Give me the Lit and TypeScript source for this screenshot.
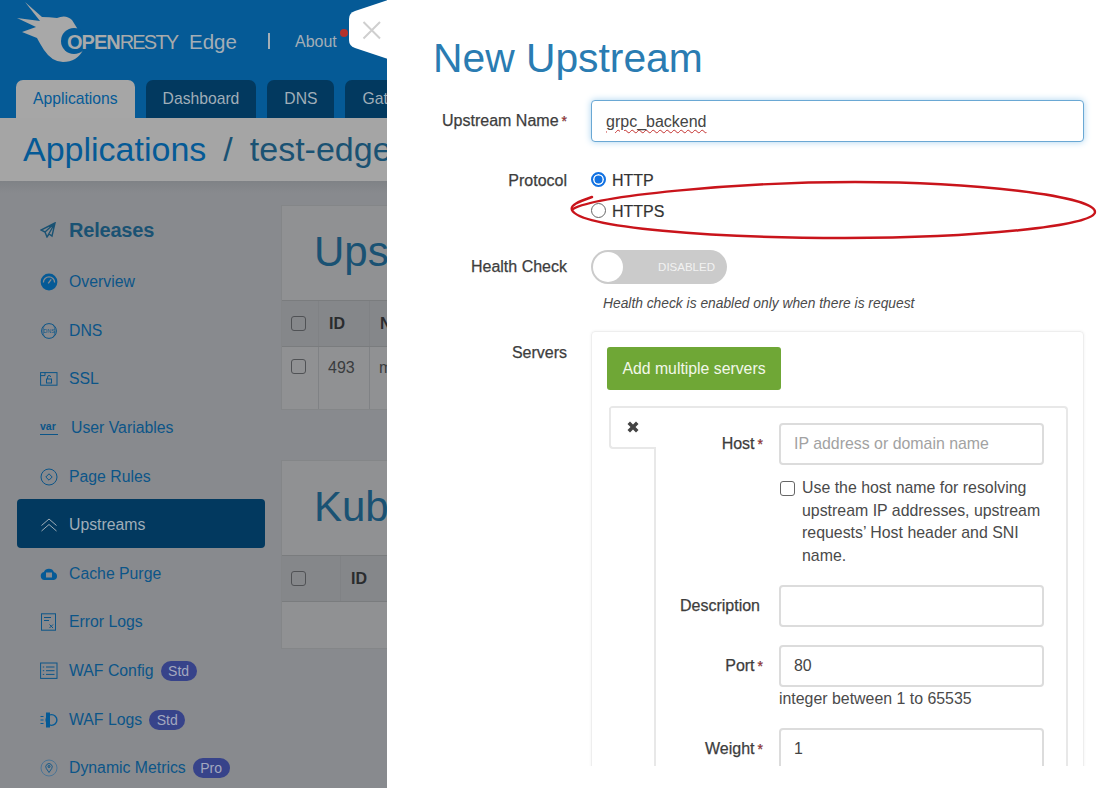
import { LitElement, html, css, svg } from "lit";
import { customElement } from "lit/decorators.js";

const stroke = (body: unknown) =>
  html`<svg class="ico" viewBox="0 0 18 18" fill="none" stroke="currentColor" stroke-width="1">${body}</svg>`;

const icons: Record<string, unknown> = {
  overview: html`<svg class="ico" viewBox="0 0 18 18"><circle cx="9" cy="9" r="8.400" fill="#055a96" /><path d="M3.400 9.500a5.600 5.600 0 0 1 11.200 0" fill="none" stroke="#888a8e" stroke-width="1.300" /><path d="M8.200 10.400l3-4" stroke="#888a8e" stroke-width="1.300" /></svg>`,
  dns: stroke(svg`<circle cx="9" cy="9" r="7.400" /><path d="M5 2.500C2.500 6 2.500 12 5 15.500M13 2.500c2.500 3.500 2.500 9.500 0 13" stroke-width=".6" /><text x="9" y="11" font-size="5.500" text-anchor="middle" fill="currentColor" stroke="none" font-family="Liberation Sans">DNS</text>`),
  ssl: stroke(svg`<rect x=".6" y="2.600" width="16.400" height="12.600" /><path d="M.6 5.600h4.400V2.600" /><rect x="6.500" y="9" width="5" height="4" /><path d="M7.600 9V7a1.500 1.500 0 0 1 3 0" />`),
  rules: stroke(svg`<circle cx="9" cy="9" r="8" /><path d="M9 5.800L12.200 9 9 12.200 5.800 9z" />`),
  upstreams: stroke(svg`<path d="M1.500 9.500L9 3l7.500 6.500M1.500 15L9 8.500 16.500 15" />`),
  cache: html`<svg class="ico" viewBox="0 0 18 18"><path d="M4.500 15a4 4 0 0 1-.6-7.900A5.500 5.500 0 0 1 14 7.200 4 4 0 0 1 13.800 15z" fill="#055a96" /><rect x="6" y="7.500" width="6" height="5" fill="#888a8e" /></svg>`,
  errors: stroke(svg`<rect x="1.500" y=".8" width="14" height="16.400" /><path d="M4 4.500h7M4 7.500h5M9.500 11.500l3.500 3.500M13 11.500L9.500 15" />`),
  wafconfig: stroke(svg`<rect x=".6" y="1" width="16.400" height="15.400" /><path d="M6 5h8.500M6 8.700h8.500M6 12.400h8.500M2.800 5h1.400M2.800 8.700h1.400M2.800 12.400h1.400" />`),
  waflogs: html`<svg class="ico" viewBox="0 0 18 18"><path d="M6 1.500h4v15H6z" fill="#055a96" /><circle cx="11.500" cy="9" r="5.400" fill="none" stroke="#055a96" stroke-width="1.400" /><path d="M.5 5.500h3M.5 9h3M.5 12.500h3" stroke="#055a96" stroke-width="1.200" /></svg>`,
  metrics: stroke(svg`<circle cx="9" cy="9" r="8" stroke="#4c7596" /><path d="M9 13.500L6.300 9.500a3.200 3.200 0 1 1 5.400 0z" stroke-width=".9" /><circle cx="9" cy="7.500" r="1" />`),
};

const navItems = [
  { icon: "overview", label: "Overview" },
  { icon: "dns", label: "DNS" },
  { icon: "ssl", label: "SSL" },
  { icon: "var", label: "User Variables" },
  { icon: "rules", label: "Page Rules" },
  { icon: "upstreams", label: "Upstreams", active: true },
  { icon: "cache", label: "Cache Purge" },
  { icon: "errors", label: "Error Logs" },
  { icon: "wafconfig", label: "WAF Config", badge: "Std" },
  { icon: "waflogs", label: "WAF Logs", badge: "Std" },
  { icon: "metrics", label: "Dynamic Metrics", badge: "Pro" },
];

@customElement("app-root")
export class AppRoot extends LitElement {
  static styles = css`
    * {
      box-sizing: border-box;
    }
    :host {
      display: block;
      width: 1098px;
      height: 788px;
      overflow: hidden;
      position: relative;
      font-family: "Liberation Sans", Arial, sans-serif;
      font-size: 16px;
    }
    .stage {
      display: flex;
      height: 788px;
    }

    /* dimmed page behind the drawer */
    .page {
      width: 387px;
      flex: none;
      overflow: hidden;
      background: #888a8e;
      display: flex;
      flex-direction: column;
    }
    .topbar {
      background: #055a96;
      height: 118px;
      flex: none;
      display: flex;
      flex-direction: column;
      justify-content: space-between;
    }
    .brand {
      display: flex;
      align-items: flex-start;
      height: 66px;
      color: #a3aeb6;
      white-space: nowrap;
    }
    .bird {
      width: 84px;
      height: 64px;
      flex: none;
      margin-left: 16px;
    }
    .logo-text {
      margin: 32px 0 0 -33px;
      font-size: 20px;
      line-height: 20px;
      color: #a8aaab;
      letter-spacing: -1.800px;
      width: 111px;
      flex: none;
      position: relative;
    }
    .logo-text b {
      letter-spacing: -1px;
    }
    .edge {
      margin-top: 29px;
      font-size: 20.500px;
      line-height: 26px;
      width: 79px;
      flex: none;
      margin-left: 11px;
    }
    .sep {
      margin-top: 33px;
      width: 2px;
      height: 16px;
      background: #a3aeb6;
      flex: none;
    }
    .about {
      margin: 32px 0 0 25px;
      line-height: 20px;
      position: relative;
    }
    .about::after {
      content: "";
      position: absolute;
      left: 45px;
      top: -3px;
      width: 8px;
      height: 8px;
      border-radius: 50%;
      background: #b5322c;
    }
    .tabs {
      display: flex;
      gap: 11px;
      padding-left: 16px;
      white-space: nowrap;
      font-size: 15.700px;
    }
    .tab {
      height: 38px;
      line-height: 37px;
      padding: 0 17px;
      background: #02395f;
      color: #a0aeb8;
      border-radius: 7px 7px 0 0;
      flex: none;
    }
    .tab.on {
      background: #a6a6a6;
      color: #055a96;
    }
    .crumbs {
      height: 63px;
      flex: none;
      background: #a5a5a5;
      padding: 11px 0 0 23px;
      font-size: 34px;
      line-height: 40px;
      white-space: nowrap;
      overflow: hidden;
      color: #055a96;
    }
    .crumbs span {
      color: #1a5273;
      margin-left: 17px;
    }
    .body {
      flex: 1;
      display: flex;
      padding-top: 24px;
      background: linear-gradient(#7f8286, #888a8e 12px);
    }
    .side {
      width: 281px;
      flex: none;
      padding-left: 17px;
    }
    .rel {
      display: flex;
      align-items: center;
      gap: 13px;
      height: 50px;
      margin-bottom: 1px;
      padding-left: 23px;
      font-size: 20px;
      font-weight: bold;
      color: #1a5273;
      letter-spacing: -0.2px;
    }
    .nav {
      display: flex;
      align-items: center;
      width: 248px;
      height: 48.600px;
      padding: 4px 0 0 23px;
      color: #0c5588;
      border-radius: 4px;
      white-space: nowrap;
      font-size: 15.800px;
    }
    .nav.on {
      background: #02395f;
      color: #a0aeb8;
    }
    .ico {
      width: 18px;
      height: 18px;
      flex: none;
      margin-right: 11px;
      color: #0c5588;
    }
    .nav.on .ico {
      color: #a0aeb8;
    }
    .var {
      font-size: 10.500px;
      font-weight: bold;
      width: 18px;
      margin-right: 13px;
      line-height: 11px;
      border-bottom: 1px solid #0c5588;
      padding-bottom: 2px;
      text-align: left;
    }
    .badge {
      margin-left: 7px;
      padding: 0 7.500px;
      height: 20px;
      line-height: 20px;
      border-radius: 10px;
      background: #37438a;
      color: #a3a8bf;
      font-size: 14px;
    }
    .main {
      flex: 1;
      min-width: 0;
    }
    .card {
      width: 106px;
      overflow: hidden;
      background: #909193;
      border: 1px solid #848688;
      border-right: 0;
    }
    .card + .card {
      margin-top: 50px;
    }
    .card h2 {
      margin: 0;
      height: 94px;
      padding: 21px 0 0 32px;
      font-size: 42px;
      line-height: 50px;
      font-weight: normal;
      white-space: nowrap;
      overflow: hidden;
      color: #1a5273;
    }
    .row {
      display: grid;
      height: 46px;
      border-top: 1px solid #7a7c7e;
      background: #85878a;
      align-items: center;
      color: #2a2c2e;
    }
    .row.data {
      height: 63px;
      background: #909193;
      align-items: start;
      padding-top: 12px;
      color: #3a3c3e;
    }
    .row.empty {
      height: 47px;
      background: #909193;
    }
    .row > div {
      white-space: nowrap;
      overflow: hidden;
    }
    .row > div + div {
      border-left: 1px solid #808285;
      align-self: stretch;
      display: flex;
      align-items: center;
    }
    .row.data > div + div {
      margin-top: -12px;
      padding-top: 12px;
      align-items: flex-start;
    }
    .row b {
      display: block;
    }
    .box {
      display: block;
      width: 15px;
      height: 15px;
      border: 1px solid #505255;
      border-radius: 3px;
      margin-left: 9px;
    }

    /* drawer */
    .drawer {
      flex: 1;
      background: #fff;
      color: #444;
    }
    .scroll {
      height: 766px;
      overflow: hidden;
      padding-right: 14px;
    }
    .drawer h1 {
      margin: 0;
      padding: 34px 0 0 46px;
      height: 100px;
      font-size: 40.800px;
      line-height: 48px;
      font-weight: normal;
      color: #2a7cb2;
    }
    .field {
      display: grid;
      grid-template-columns: 180px 1fr;
      column-gap: 24px;
    }
    .lbl {
      text-align: right;
      color: #3d3d3d;
      -webkit-text-stroke: 0.25px #3d3d3d;
      white-space: nowrap;
      line-height: 20px;
    }
    .lbl i {
      color: #c0282d;
      font-style: normal;
      font-size: 14px;
      margin-left: 3px;
    }
    .input {
      display: block;
      width: 100%;
      height: 42px;
      border: 2px solid #dcdcdc;
      border-radius: 4px;
      padding: 0 13px;
      font: inherit;
      color: #444;
      background: #fff;
      outline: none;
    }
    .input::placeholder {
      color: #a2a2a2;
    }
    .input.focus {
      border: 1px solid #6aa8d4;
      box-shadow: 0 0 7px #a9d3ef;
      padding: 0 14px;
      line-height: 41px;
    }
    .input.focus span {
      text-decoration: underline wavy #c4312f 1px;
      text-underline-offset: 2px;
    }
    .proto {
      margin-top: 29px;
    }
    .radios {
      display: flex;
      flex-direction: column;
      gap: 11px;
      color: #333;
    }
    .radio {
      display: flex;
      align-items: center;
      gap: 6px;
      height: 20px;
      -webkit-text-stroke: 0.2px #333;
    }
    .dot {
      width: 15px;
      height: 15px;
      border-radius: 50%;
      border: 1px solid #666;
      flex: none;
      margin-top: -3px;
    }
    .dot.sel {
      border: 2px solid #1272e2;
      background: #1272e2;
      box-shadow: inset 0 0 0 1.500px #fff;
    }
    .health {
      margin-top: 28px;
    }
    .health .lbl {
      padding-top: 7px;
    }
    .toggle {
      width: 136px;
      height: 34px;
      border-radius: 17px;
      background: #cbcbcb;
      display: flex;
      align-items: center;
      justify-content: space-between;
      padding: 0 12px 0 2px;
      color: #f2f2f2;
      font-size: 11.500px;
    }
    .toggle::before {
      content: "";
      width: 30px;
      height: 30px;
      border-radius: 50%;
      background: #fff;
    }
    .hint {
      margin: 11px 0 0 12px;
      font-size: 13.800px;
      line-height: 18px;
      font-style: italic;
      color: #4a4a4a;
    }
    .servers {
      margin-top: 18px;
    }
    .servers > .lbl {
      padding-top: 12px;
    }
    .panel {
      border: 1px solid #eeeeee;
      border-radius: 4px;
      padding: 15px 15px 0;
      box-shadow: 0 0 3px #f0f0f0;
    }
    .btn {
      display: block;
      width: 174px;
      height: 43px;
      border: 0;
      border-radius: 3px;
      background: #6fa736;
      color: #f2f7ea;
      font: inherit;
      font-size: 15.800px;
    }
    .item {
      margin: 16px 0 0 2px;
      border-top: 2px solid #e8e8e8;
      border-right: 2px solid #e8e8e8;
      border-radius: 4px 4px 0 0;
      display: grid;
      grid-template-columns: 47px 1fr;
      font-size: 15.900px;
    }
    .left {
      display: flex;
      flex-direction: column;
    }
    .rm {
      height: 41px;
      flex: none;
      border-left: 2px solid #e8e8e8;
      border-bottom: 2px solid #e8e8e8;
      border-radius: 0 0 0 4px;
      padding: 13px 0 0 16px;
    }
    .rm svg {
      display: block;
      width: 12px;
      height: 12px;
      fill: #444;
    }
    .rail {
      flex: 1;
      border-right: 2px solid #e8e8e8;
    }
    .fields {
      padding-top: 15px;
    }
    .sub {
      display: grid;
      grid-template-columns: 107px 265px;
      column-gap: 16px;
      margin-bottom: 18px;
    }
    .sub .lbl {
      padding-top: 11px;
      font-size: 16px;
    }
    .sub .lbl.inset {
      padding-right: 3px;
    }
    .help {
      line-height: 20px;
      margin-top: 2px;
      margin-bottom: 1px;
      color: #4a4a4a;
    }
    .check {
      display: flex;
      gap: 7px;
      margin-top: 12px;
      line-height: 22.600px;
      color: #4a4a4a;
    }
    .check .box {
      margin: 4px 0 0 1px;
      flex: none;
      border-color: #666;
    }

    /* over the content: close tab and the hand-drawn annotation */
    .close {
      position: absolute;
      left: 349px;
      top: 0;
      width: 39px;
      height: 60px;
    }
    .mark {
      position: absolute;
      left: 565px;
      top: 176px;
      width: 533px;
      height: 68px;
      pointer-events: none;
    }
  `;

  private renderNav(item: (typeof navItems)[number]) {
    return html`<div class="nav ${item.active ? "on" : ""}">
      ${item.icon === "var" ? html`<span class="var">var</span>` : icons[item.icon]}
      <span>${item.label}</span>
      ${item.badge ? html`<span class="badge">${item.badge}</span>` : ""}
    </div>`;
  }

  private renderPage() {
    return html`<div class="page">
      <div class="topbar">
        <div class="brand">
          <svg class="bird" viewBox="0 0 84 64">
            <path
              fill="#a8a8a8"
              d="M9 2L26 17Q33 17 41 18Q50 14 56 20L61 28L67 50Q61 62 47 62Q36 62 28 50Q23 42 21 38L6 32L20 27L1 18L24 21Z"
            />
            <circle cx="58" cy="41" r="13" fill="#055a96" />
          </svg>
          <div class="logo-text"><b>OPEN</b>RESTY</div>
          <div class="edge">Edge</div>
          <div class="sep"></div>
          <div class="about">About</div>
        </div>
        <div class="tabs">
          <div class="tab on">Applications</div>
          <div class="tab">Dashboard</div>
          <div class="tab">DNS</div>
          <div class="tab">Gateway</div>
        </div>
      </div>
      <div class="crumbs">Applications<span>/</span><span>test-edge</span></div>
      <div class="body">
        <div class="side">
          <div class="rel">
            <svg width="16" height="16" viewBox="0 0 16 16" fill="none" stroke="#1a5273" stroke-width="1.400">
              <path d="M15 1L1 8l4 2 2 5 2-3 3 2zM15 1L5 10M15 1L7 15" />
            </svg>
            Releases
          </div>
          ${navItems.map((n) => this.renderNav(n))}
        </div>
        <div class="main">
          <div class="card">
            <h2>Upstreams</h2>
            <div class="row" style="grid-template-columns:36px 51px 1fr">
              <div><span class="box"></span></div>
              <div style="padding-left:10px"><b>ID</b></div>
              <div style="padding-left:10px"><b>Name</b></div>
            </div>
            <div class="row data" style="grid-template-columns:36px 51px 1fr">
              <div><span class="box"></span></div>
              <div style="padding-left:9px">493</div>
              <div style="padding-left:9px">my</div>
            </div>
          </div>
          <div class="card">
            <h2>Kubernetes</h2>
            <div class="row" style="grid-template-columns:58px 1fr">
              <div><span class="box"></span></div>
              <div style="padding-left:10px"><b>ID</b></div>
            </div>
            <div class="row empty"></div>
          </div>
        </div>
      </div>
    </div>`;
  }

  private renderDrawer() {
    return html`<div class="drawer">
      <div class="scroll">
        <h1>New Upstream</h1>
        <div class="field">
          <div class="lbl" style="padding-top:11px">Upstream Name<i>*</i></div>
          <div class="input focus"><span>grpc_backend</span></div>
        </div>
        <div class="field proto">
          <div class="lbl">Protocol</div>
          <div class="radios">
            <div class="radio"><span class="dot sel"></span>HTTP</div>
            <div class="radio"><span class="dot"></span>HTTPS</div>
          </div>
        </div>
        <div class="field health">
          <div class="lbl">Health Check</div>
          <div>
            <div class="toggle">DISABLED</div>
            <div class="hint">Health check is enabled only when there is request</div>
          </div>
        </div>
        <div class="field servers">
          <div class="lbl">Servers</div>
          <div class="panel">
            <button class="btn">Add multiple servers</button>
            <div class="item">
              <div class="left">
                <div class="rm">
                  <svg viewBox="0 0 12 12"><path d="M3 .5L6 3.500 9 .5l2.500 2.500L8.500 6l3 3L9 11.500l-3-3-3 3L.5 9l3-3-3-3z" /></svg>
                </div>
                <div class="rail"></div>
              </div>
              <div class="fields">
                <div class="sub">
                  <div class="lbl">Host<i>*</i></div>
                  <div>
                    <input class="input" placeholder="IP address or domain name" />
                    <div class="check">
                      <span class="box"></span>
                      <span>Use the host name for resolving upstream IP addresses, upstream requests’ Host header and SNI name.</span>
                    </div>
                  </div>
                </div>
                <div class="sub">
                  <div class="lbl inset">Description</div>
                  <input class="input" />
                </div>
                <div class="sub">
                  <div class="lbl">Port<i>*</i></div>
                  <div>
                    <input class="input" .value=${"80"} />
                    <div class="help">integer between 1 to 65535</div>
                  </div>
                </div>
                <div class="sub">
                  <div class="lbl">Weight<i>*</i></div>
                  <input class="input" .value=${"1"} />
                </div>
              </div>
            </div>
          </div>
        </div>
      </div>
    </div>`;
  }

  render() {
    return html`<div class="stage">${this.renderPage()} ${this.renderDrawer()}</div>
      <svg class="close" viewBox="0 0 39 60">
        <path d="M39 0L6 11Q0 13 0 19v21q0 6 6 8l33 11z" fill="#fff" />
        <path d="M14.500 22L31 38.500M31 22L14.500 38.500" stroke="#cfcfcf" stroke-width="2" />
      </svg>
      <svg class="mark" viewBox="0 0 533 68" fill="none">
        <path
          d="M8 33C30 20 170 6 290 6c120 0 240 14 240 30 0 14-120 26-250 26C150 62 15 52 7 34c-2-5 6-8 20-13"
          stroke="#c9141b"
          stroke-width="2.400"
          stroke-linecap="round"
        />
      </svg>`;
  }
}
